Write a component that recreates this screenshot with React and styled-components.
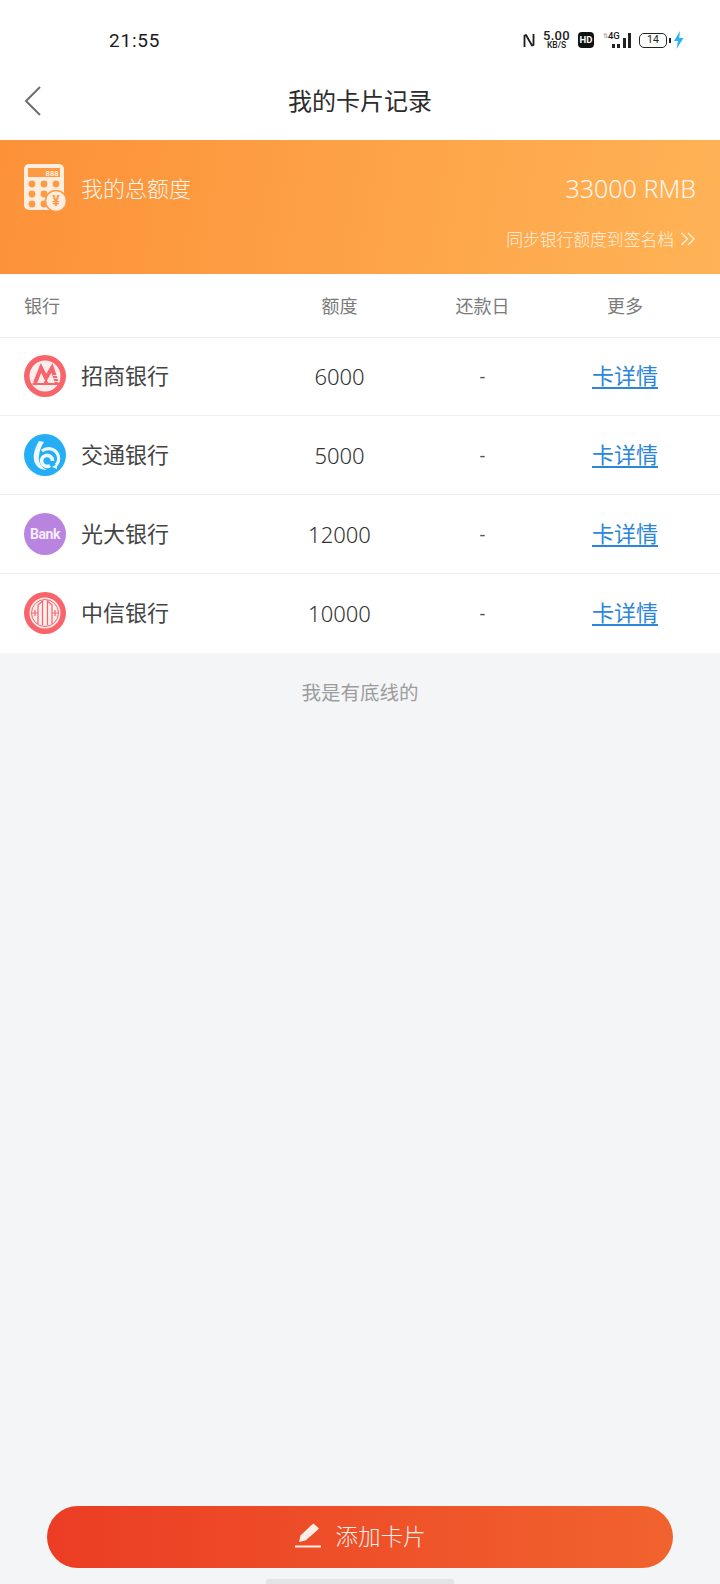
import React from "react";
import styled, { createGlobalStyle } from "styled-components";

const Global = createGlobalStyle`
  html, body { margin: 0; padding: 0; background: #f4f5f7; }
  body { font-family: "Noto Sans CJK SC", "Noto Sans", sans-serif; }
  * { box-sizing: border-box; }
`;
const Page = styled.div`
  width: 720px; height: 1584px; display: flex; flex-direction: column;
  background: #f4f5f7; overflow: hidden;
`;
const StatusBar = styled.div`
  height: 70px; background: #fff; display: flex; align-items: center;
  justify-content: space-between; padding: 10px 36px 0 109px; color: #1b1b1b;
`;
const Clock = styled.div`
  font: 400 19px/1 Roboto, sans-serif; letter-spacing: 0.8px;
`;
const StatusIcons = styled.div`display: flex; align-items: center;`;
const Speed = styled.div`
  display: flex; flex-direction: column; align-items: center; margin: 0 8px 0 7px;
  font-family: Roboto, sans-serif; font-weight: 500; color: #222;
  span:first-child { font-size: 13px; line-height: 11px; letter-spacing: 0.3px; }
  span:last-child { font-size: 8.5px; line-height: 9px; }
`;
const HdBadge = styled.div`
  width: 16px; height: 16px; border-radius: 4px; background: #111; color: #fff;
  font: 700 9.5px/16px Roboto, sans-serif; text-align: center; margin-right: 9px;
`;
const Signal = styled.div`
  position: relative; width: 28px; height: 16px; margin-right: 8px;
  display: flex; align-items: flex-end; justify-content: flex-end; gap: 2.4px;
`;
const SignalLabel = styled.span`
  position: absolute; left: 5px; top: -1px; font: 500 9.5px/9px Roboto, sans-serif; color: #222;
  letter-spacing: -0.2px;
`;
const SignalArrow = styled.span`
  position: absolute; left: 0; top: 0; font: 400 6.5px/8px "DejaVu Sans", sans-serif; color: #999;
`;
const SignalBar = styled.i`
  display: block; width: 3px; height: ${p => p.$h}px; background: #222;
`;
const Battery = styled.div`
  width: 28px; height: 15px; border: 1.4px solid #222; border-radius: 5px;
  font: 400 10.5px/12.5px Roboto, sans-serif; text-align: center; color: #222;
  margin-right: 2px;
`;
const BatteryTip = styled.i`
  display: block; width: 2px; height: 5px; background: #222; margin-right: 2px;
`;
const NavBar = styled.header`
  height: 70px; background: #fff; display: flex; align-items: center;
  justify-content: center; position: relative; padding-bottom: 10px;
`;
const Back = styled.svg`position: absolute; left: 23px; top: 15px;`;
const Title = styled.h1`
  margin: 0; font-size: 24px; line-height: 32px; font-weight: 400; color: #2b2b2b;
`;
const Banner = styled.section`
  height: 134px; padding: 24px 24px 0; display: flex; flex-direction: column;
  background: linear-gradient(100deg, #fc9138 0%, #ffb356 100%); color: #fff;
`;
const BannerTop = styled.div`display: flex; align-items: flex-start;`;
const BannerLabel = styled.div`
  margin: -1px 0 0 15px; font-size: 22px; line-height: 48px; font-weight: 300; color: #fff6ec;
`;
const BannerTotal = styled.div`
  margin-left: auto; font: 300 25px/48px "Noto Sans", sans-serif; color: #fff6ec;
`;
const Sync = styled.div`
  display: flex; justify-content: flex-end; align-items: center; gap: 6px; margin-top: 15px;
  font-size: 16.8px; line-height: 24px; font-weight: 300; color: #fff0df;
`;
const Grid = styled.div`
  display: grid; grid-template-columns: 1fr 143px 143px 142px; align-items: center;
  padding: 0 24px; background: #fff;
  height: ${p => p.$h}px; border-bottom: ${p => p.$last ? "none" : "1.5px solid #eeeeee"};
`;
const Head = styled.div`
  font-size: 18px; color: #7b7b7b; font-weight: 400;
  text-align: ${p => p.$left ? "left" : "center"};
`;
const BankCell = styled.div`display: flex; align-items: center; gap: 15px;`;
const BankName = styled.span`font-size: 22px; color: #444; margin-bottom: 4px;`;
const Amount = styled.div`
  font: 300 22px "Noto Sans", sans-serif; color: #333; text-align: center;
`;
const Due = styled.div`font: 400 18px "Noto Sans", sans-serif; color: #555; text-align: center;`;
const Detail = styled.a`
  font-size: 22px; color: #2a86d8; text-align: center; text-decoration: underline;
  text-underline-offset: 3px; margin-bottom: 4px;
`;
const Baseline = styled.div`
  margin-top: 24px; text-align: center; font-size: 19.5px; line-height: 30px; color: #9c9c9c;
`;
const Spacer = styled.div`flex: 1;`;
const AddButton = styled.button`
  align-self: center; width: 626px; height: 62px; border: none; border-radius: 31px;
  background: linear-gradient(90deg, #eb3d24 0%, #f1632e 100%); color: #ffeee5;
  display: flex; align-items: center; justify-content: center; gap: 13px; padding: 0 0 4px;
  font-family: inherit; font-size: 22.5px; font-weight: 300;
`;
const PenIcon = styled.svg`margin-top: 2px;`;
const Home = styled.div`
  align-self: center; margin-top: 11px; width: 188px; height: 5px; background: #e3e5e7;
  border-radius: 2px 2px 0 0;
`;

const Logo = styled.svg`flex: none; display: block;`;

const CmbLogo = () => (
  <Logo width="42" height="42" viewBox="0 0 42 42">
    <circle cx="21" cy="21" r="21" fill="#f9636a" />
    <circle cx="21" cy="21" r="15.5" fill="#fdeeee" />
    <path d="M11 28 L17 13 L22 23 L28 13 L33 28" fill="none" stroke="#f9636a" strokeWidth="4" strokeLinejoin="miter" />
    <path d="M8.5 28 H35 V30 H8.5 Z M19 29 L22 24 L25 29 Z" fill="#f9636a" />
    <path d="M29 20.5 H36 M29.5 23.5 H36 M30.5 26.5 H36" stroke="#fdeeee" strokeWidth="1" />
  </Logo>
);
const BocomLogo = () => (
  <Logo width="42" height="42" viewBox="0 0 42 42">
    <circle cx="21" cy="21" r="21" fill="#25aef5" />
    <path d="M15 7 C11 14 9 20 10 26 C11 32 16 36 23 36 C17 33 14 28 15 22 C15.5 17 17 12 20 8 Z" fill="#eef9ff" />
    <path d="M18 17 C24 12.5 33 15 34.5 23 C35 26 34 29 32 31" fill="none" stroke="#eef9ff" strokeWidth="3.2" />
    <path d="M28.5 27 A5.5 5.5 0 1 0 26 31.5" fill="none" stroke="#eef9ff" strokeWidth="3.6" />
    <path d="M28 33 L33 30 L33 35 Z" fill="#eef9ff" />
  </Logo>
);
const CebLogo = () => (
  <Logo width="42" height="42" viewBox="0 0 42 42">
    <circle cx="21" cy="21" r="21" fill="#b984e0" />
    <text x="21" y="26" textAnchor="middle" fontFamily="Roboto, sans-serif" fontWeight="700" fontSize="14" letterSpacing="-0.5" fill="#f5ecfb">Bank</text>
  </Logo>
);
const CiticLogo = () => (
  <Logo width="42" height="42" viewBox="0 0 42 42">
    <circle cx="21" cy="21" r="21" fill="#f9636a" />
    <circle cx="21" cy="21" r="15.5" fill="#fdeeee" />
    <circle cx="21" cy="21" r="13.5" fill="none" stroke="#f9636a" strokeWidth="1" />
    <path d="M14 32 V13 L18.5 9 V33 M28 32 V13 L23.5 9 V33 M8 21 H14 M28 21 H34 M11 18 V24 M31 18 V24" stroke="#f9636a" strokeWidth="1.2" fill="none" />
  </Logo>
);

const banks = [
  { name: "招商银行", amount: "6000", logo: <CmbLogo /> },
  { name: "交通银行", amount: "5000", logo: <BocomLogo /> },
  { name: "光大银行", amount: "12000", logo: <CebLogo /> },
  { name: "中信银行", amount: "10000", logo: <CiticLogo /> },
];

export default function App() {
  return (
    <Page>
      <Global />
      <StatusBar>
        <Clock>21:55</Clock>
        <StatusIcons>
          <svg width="14" height="17" viewBox="0 0 14 17" fill="none" stroke="#1b1b1b" strokeWidth="1.8">
            <path d="M2.5 15 V3.5 L4 3 L10 13.5 L11.5 13 V2" strokeLinejoin="round" />
          </svg>
          <Speed><span>5.00</span><span>KB/S</span></Speed>
          <HdBadge>HD</HdBadge>
          <Signal>
            <SignalArrow>⇅</SignalArrow>
            <SignalLabel>4G</SignalLabel>
            <SignalBar $h={4} />
            <SignalBar $h={4} />
            <SignalBar $h={10} />
            <SignalBar $h={15} />
          </Signal>
          <Battery>14</Battery>
          <BatteryTip />
          <svg width="11" height="18" viewBox="0 0 11 18"><path d="M7 0 L1 10 H5 L3.5 18 L10.5 7 H6.2 Z" fill="#26b4ef" /></svg>
        </StatusIcons>
      </StatusBar>
      <NavBar>
        <Back width="20" height="32" viewBox="0 0 20 32" fill="none" stroke="#6d6d6d" strokeWidth="2">
          <path d="M17 2 L3 16 L17 30" />
        </Back>
        <Title>我的卡片记录</Title>
      </NavBar>
      <Banner>
        <BannerTop>
          <svg width="42" height="48" viewBox="0 0 42 48">
            <rect x="0" y="0" width="40" height="46" rx="5" fill="#fdeee0" />
            <rect x="4" y="4" width="32" height="9" fill="#fd9a44" />
            <text x="34.5" y="11.5" textAnchor="end" fontFamily="Roboto, sans-serif" fontSize="7.5" fontWeight="700" fill="#fdeee0">888</text>
            {[8, 20, 32].map(x => [20, 30, 40].map(y => (
              <circle key={`${x}-${y}`} cx={x} cy={y} r="3.4" fill="#fd9a44" />
            )))}
            <circle cx="32" cy="37" r="10.5" fill="#fdeee0" stroke="#fd9a44" strokeWidth="1.5" />
            <text x="32" y="42" textAnchor="middle" fontFamily="Roboto, sans-serif" fontSize="14" fontWeight="700" fill="#fd9a44">¥</text>
          </svg>
          <BannerLabel>我的总额度</BannerLabel>
          <BannerTotal>33000 RMB</BannerTotal>
        </BannerTop>
        <Sync>
          同步银行额度到签名档
          <svg width="16" height="16" viewBox="0 0 16 16" fill="none" stroke="#fff0df" strokeWidth="1.3">
            <path d="M1.5 2 L7.5 8 L1.5 14 M8 2 L14 8 L8 14" />
          </svg>
        </Sync>
      </Banner>
      <Grid $h={63.5}>
        <Head $left>银行</Head>
        <Head>额度</Head>
        <Head>还款日</Head>
        <Head>更多</Head>
      </Grid>
      {banks.map((b, i) => (
        <Grid key={b.name} $h={i === banks.length - 1 ? 79.4 : 78.7} $last={i === banks.length - 1}>
          <BankCell>{b.logo}<BankName>{b.name}</BankName></BankCell>
          <Amount>{b.amount}</Amount>
          <Due>-</Due>
          <Detail>卡详情</Detail>
        </Grid>
      ))}
      <Baseline>我是有底线的</Baseline>
      <Spacer />
      <AddButton>
        <PenIcon width="28" height="26" viewBox="0 0 28 26" fill="#ffeee5">
          <path d="M5 19 L6.5 12.5 L17 2.5 L19.5 0.5 L25 5.5 L22.5 8 L11.5 17.5 Z" />
          <rect x="1" y="22.5" width="26" height="2" />
        </PenIcon>
        添加卡片
      </AddButton>
      <Home />
    </Page>
  );
}
